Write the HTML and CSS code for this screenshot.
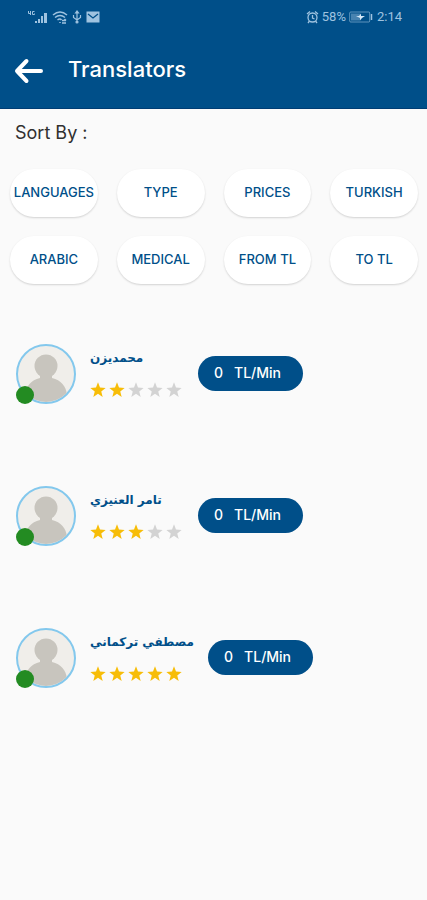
FILE: index.html
```html
<!DOCTYPE html>
<html lang="en">
<head>
<meta charset="utf-8">
<meta name="viewport" content="width=device-width, initial-scale=1">
<title>Translators</title>
<link rel="stylesheet" href="styles.css">
</head>
<body>
<svg width="0" height="0" class="defs" aria-hidden="true">
  <symbol id="star" viewBox="0 0 24 24"><path d="M12 17.800 19 22.500l-2.100-8.200L23.500 9l-8.500-.6L12 .5 9 8.400.5 9l6.600 5.300L5 22.500z"/></symbol>
  <symbol id="person" viewBox="0 0 56 56"><circle cx="28" cy="20" r="11.500"/><path d="M22 26h12v6c9 2 14 8 15 17v7H7v-7c1-9 6-15 15-17z"/></symbol>
</svg>
<header class="top">
  <div class="status">
    <div class="status-side">
      <svg class="signal" viewBox="0 0 21 14" fill="currentColor" aria-hidden="true"><path d="M1.500 1v2.500h2M3.500 1v4M7.500 1.500h-2v3h2v-1" fill="none" stroke="currentColor"/><path d="M8 11h2v2H8zM11 9h2v4h-2zM14 6h2v7h-2zM17 3h3v10h-3z"/></svg>
      <svg class="wifi" viewBox="0 0 16 14" fill="none" stroke="currentColor" stroke-width="1.500" aria-hidden="true"><path d="M1 5q7-6 14 0M3 7.500q5-4 10 0M5.500 10q2.500-2 4 0M8 12v1M10 10.500h4m-1.500-1.500 1.500 1.500M14 13h-4"/></svg>
      <svg class="usb" viewBox="0 0 10 14" fill="none" stroke="currentColor" stroke-width="1.200" aria-hidden="true"><path d="M5 2v10M1.500 5v2.500L5 10l3.500-2.500V5M3.500 3 5 1l1.500 2z"/><circle cx="5" cy="12" r="1" fill="currentColor"/></svg>
      <svg class="mail" viewBox="0 0 14 12" aria-hidden="true"><rect x="0.500" y="0.500" width="13" height="11" fill="currentColor"/><path d="m2 3 5 4 5-4" fill="none" stroke="#004f89" stroke-width="1.300"/></svg>
    </div>
    <div class="status-side status-right">
      <svg class="alarm" viewBox="0 0 13 14" fill="none" stroke="currentColor" stroke-width="1.300" aria-hidden="true"><circle cx="6.500" cy="7.500" r="4.500"/><path d="M6.500 5v3l2 1M1 4l3-2.500M12 4 9 1.500M3.500 11 2 13M9.500 11l1.500 2"/></svg>
      <span>58%</span>
      <svg class="battery" viewBox="0 0 25 12" aria-hidden="true"><rect x="0.700" y="1" width="20" height="10" rx="1" fill="none" stroke="currentColor" opacity=".6"/><path d="M2 2.500h9v7H2z" fill="currentColor" opacity=".45"/><path d="M7 5h3l2-2.500V5h4L13 7l-2 2.500V7z" fill="#d5e8f7"/><path d="M22.500 3v6" stroke="currentColor" stroke-width="1.500"/></svg>
      <span>2:14</span>
    </div>
  </div>
  <div class="appbar">
    <button class="back" type="button" aria-label="Back"><svg viewBox="0 0 30 26" fill="none" stroke="currentColor" stroke-width="4" stroke-linecap="round" stroke-linejoin="round"><path d="M12.500 3 3 13l9.500 10M3 13h24"/></svg></button>
    <h1>Translators</h1>
  </div>
</header>
<main>
  <h2>Sort By :</h2>
  <div class="filters">
    <button type="button">LANGUAGES</button>
    <button type="button">TYPE</button>
    <button type="button">PRICES</button>
    <button type="button">TURKISH</button>
    <button type="button">ARABIC</button>
    <button type="button">MEDICAL</button>
    <button type="button">FROM TL</button>
    <button type="button">TO TL</button>
  </div>
  <ul class="people">
    <li>
      <div class="avatar"><svg aria-hidden="true"><use href="#person"/></svg><span class="online"></span></div>
      <div class="info">
        <span class="name" lang="ar" dir="rtl">محمديزن</span>
        <div class="stars" role="img" aria-label="2 of 5 stars"><svg class="on"><use href="#star"/></svg><svg class="on"><use href="#star"/></svg><svg><use href="#star"/></svg><svg><use href="#star"/></svg><svg><use href="#star"/></svg></div>
      </div>
      <button class="price" type="button"><span>0</span><span>TL/Min</span></button>
    </li>
    <li>
      <div class="avatar"><svg aria-hidden="true"><use href="#person"/></svg><span class="online"></span></div>
      <div class="info">
        <span class="name" lang="ar" dir="rtl">تامر العنيزي</span>
        <div class="stars" role="img" aria-label="3 of 5 stars"><svg class="on"><use href="#star"/></svg><svg class="on"><use href="#star"/></svg><svg class="on"><use href="#star"/></svg><svg><use href="#star"/></svg><svg><use href="#star"/></svg></div>
      </div>
      <button class="price" type="button"><span>0</span><span>TL/Min</span></button>
    </li>
    <li>
      <div class="avatar"><svg aria-hidden="true"><use href="#person"/></svg><span class="online"></span></div>
      <div class="info">
        <span class="name" lang="ar" dir="rtl">مصطفي تركماني</span>
        <div class="stars" role="img" aria-label="5 of 5 stars"><svg class="on"><use href="#star"/></svg><svg class="on"><use href="#star"/></svg><svg class="on"><use href="#star"/></svg><svg class="on"><use href="#star"/></svg><svg class="on"><use href="#star"/></svg></div>
      </div>
      <button class="price" type="button"><span>0</span><span>TL/Min</span></button>
    </li>
  </ul>
</main>
</body>
</html>
```
FILE: styles.css
```css
* { box-sizing: border-box; }
body {
  margin: 0;
  min-height: 100vh;
  background: #fafafa;
  color: #303030;
  font-family: Inter, "Liberation Sans", sans-serif;
}
button { border: 0; font: inherit; cursor: pointer; }
svg { display: block; flex: none; }
.defs { position: absolute; }

.top { background: #004f89; color: #fff; border-bottom: 1px solid #003d74; }
.status {
  display: flex;
  justify-content: space-between;
  align-items: center;
  height: 33px;
  padding: 0 25px 0 27px;
  color: #9fc3e0;
  font: 400 13px/16px Roboto, sans-serif;
}
.status-side { display: flex; align-items: center; gap: 4px; }
.status-right { gap: 3px; }
.signal { width: 21px; height: 14px; }
.wifi { width: 16px; height: 14px; }
.usb { width: 10px; height: 14px; }
.mail { width: 14px; height: 12px; }
.alarm { width: 13px; height: 14px; }
.battery { width: 25px; height: 12px; }

.appbar { display: flex; align-items: center; gap: 24px; height: 75px; padding: 0 14px; }
.back { padding: 0; background: none; color: #fff; }
.back svg { width: 30px; height: 26px; }
h1 { margin: 0; font-size: 22px; line-height: 30px; font-weight: 500; padding-bottom: 4px; }

h2 { margin: 0; padding: 12px 15px 0; font-size: 18px; line-height: 24px; font-weight: 400; }
.filters {
  display: grid;
  grid-template-columns: repeat(4, minmax(0, 1fr));
  gap: 19px;
  padding: 24px 9px 0 10px;
}
.filters button {
  display: flex;
  align-items: center;
  justify-content: center;
  height: 48px;
  padding: 0 0 2px;
  border-radius: 24px;
  background: #fff;
  box-shadow: 0 1px 2px rgba(0, 0, 0, .16);
  color: #004f89;
  font-size: 13px;
  font-weight: 500;
  white-space: nowrap;
}

.people { display: grid; gap: 82px; margin: 0; padding: 60px 16px; list-style: none; }
.people li { display: flex; align-items: center; height: 60px; }
.avatar { position: relative; width: 60px; height: 60px; margin-right: 14px; }
.avatar svg {
  width: 60px;
  height: 60px;
  border: 2px solid #83c8ed;
  border-radius: 50%;
  background: #f0eeea;
  fill: #c8c5be;
}
.online {
  position: absolute;
  left: 0;
  bottom: 0;
  width: 18px;
  height: 18px;
  border-radius: 50%;
  background: #238b22;
}
.info {
  display: flex;
  flex-direction: column;
  align-items: flex-start;
  gap: 13px;
  min-width: 94px;
  margin-right: 14px;
  padding-bottom: 4px;
}
.name { color: #004f89; font: 700 12px/22px "DejaVu Sans", sans-serif; white-space: nowrap; }
.stars { display: flex; gap: 3px; }
.stars svg { width: 16px; height: 16px; fill: #d3d3d3; }
.stars .on { fill: #f7bd08; }
.price {
  display: flex;
  align-items: center;
  justify-content: center;
  gap: 11px;
  width: 105px;
  height: 35px;
  margin-bottom: 2px;
  padding: 0 6px 2px 0;
  border-radius: 18px;
  background: #004f89;
  color: #fff;
  font-size: 14px;
  font-weight: 500;
}
```
